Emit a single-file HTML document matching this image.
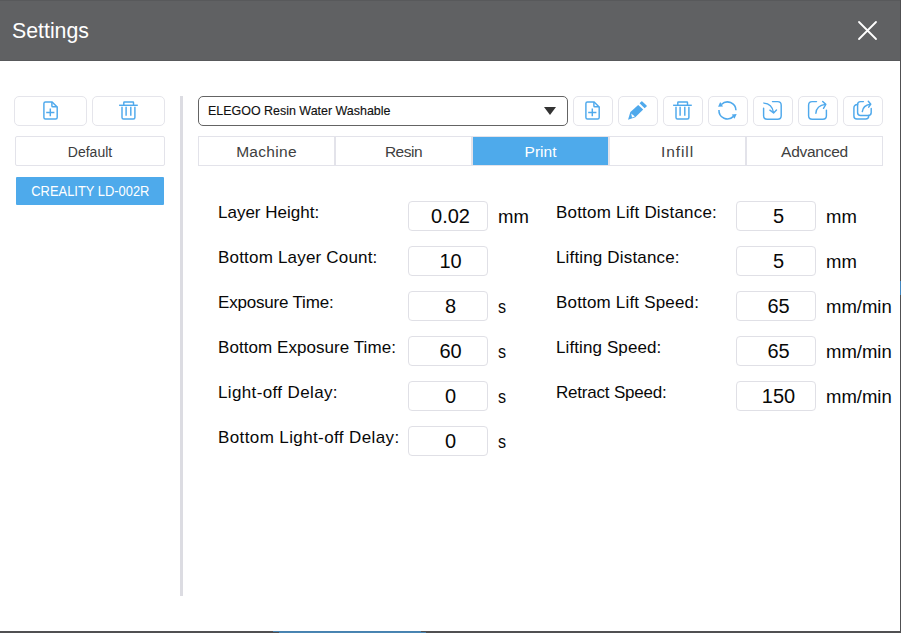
<!DOCTYPE html>
<html><head><meta charset="utf-8">
<style>
*{box-sizing:border-box;margin:0;padding:0}
html,body{width:901px;height:633px;overflow:hidden;background:#fff;font-family:"Liberation Sans",sans-serif}
.abs{position:absolute}
#hdr{left:0;top:0;width:901px;height:61px;background:#606163;border-top:1px solid #58595b;border-bottom:1px solid #58595b}
#title{left:12px;top:19px;font-size:21.3px;line-height:24px;color:#fff;white-space:nowrap}
#rb{left:900px;top:0;width:1px;height:633px;background:#505052}
#bb{left:0;top:631px;width:901px;height:2px;background:#505052}
.btn{position:absolute;height:30px;border:1px solid #e5e5eb;border-radius:5px;background:#fff}
.btn svg{position:absolute;left:0;top:0}
.lst{position:absolute;left:15px;width:150px;height:30px;font-size:14px;line-height:30px;text-align:center;white-space:nowrap}
#dv{left:180px;top:96px;width:3px;height:500px;background:#dcdce2}
#combo{left:198px;top:96px;width:370px;height:30px;border:1px solid #646464;border-radius:5px;background:#fff}
#combotxt{left:208px;top:103px;font-size:13.4px;line-height:16px;color:#111;white-space:nowrap;-webkit-text-stroke:0.15px #111;transform:scaleX(0.93);transform-origin:0 0}
#tri{left:544px;top:107px;width:0;height:0;border-left:6px solid transparent;border-right:6px solid transparent;border-top:8px solid #333}
.tab{position:absolute;top:136px;width:137px;height:30px;border:1px solid #e3e3ea;font-size:15.5px;line-height:29px;text-align:center;color:#404040;white-space:nowrap}
.tab.on{background:#4eaaeb;color:#fff}
.lbl{position:absolute;font-size:17px;line-height:20px;color:#080808;white-space:nowrap}
.inp{position:absolute;width:80px;height:30px;border:1px solid #e0e0e6;border-radius:4px;font-size:20px;line-height:28px;text-align:center;color:#080808;padding-left:5px}
.unit{position:absolute;font-size:18.5px;line-height:22px;color:#080808;white-space:nowrap}
</style></head><body>
<div id="hdr" class="abs"></div>
<div id="title" class="abs">Settings</div>
<svg class="abs" style="left:850px;top:14px" width="34" height="34" viewBox="0 0 34 34"><path d="M9,8 L26,25 M26,8 L9,25" stroke="#fff" stroke-width="1.8" stroke-linecap="round" fill="none"/></svg>

<!-- sidebar -->
<div class="btn" style="left:14px;top:96px;width:73px"></div>
<div class="btn" style="left:92px;top:96px;width:73px"></div>
<div class="lst" style="top:136px;border:1px solid #e3e3ea;border-radius:2px;color:#3c3c3c">Default</div>
<div class="lst" style="top:177px;left:16px;width:148px;height:28px;line-height:28px;background:#4eaaeb;color:#fff;border-radius:1px"><span style="display:inline-block;font-size:14.5px;transform:scaleX(0.89)">CREALITY LD-002R</span></div>
<div id="dv" class="abs"></div>

<!-- combo -->
<div id="combo" class="abs"></div>
<div id="combotxt" class="abs">ELEGOO Resin Water Washable</div>
<div id="tri" class="abs"></div>

<!-- toolbar buttons -->
<div class="btn" style="left:573px;top:96px;width:40px"></div>
<div class="btn" style="left:618px;top:96px;width:40px"></div>
<div class="btn" style="left:663px;top:96px;width:40px"></div>
<div class="btn" style="left:708px;top:96px;width:40px"></div>
<div class="btn" style="left:753px;top:96px;width:40px"></div>
<div class="btn" style="left:798px;top:96px;width:40px"></div>
<div class="btn" style="left:843px;top:96px;width:40px"></div>

<!-- tabs -->
<div class="tab" style="left:198px;letter-spacing:0.3px">Machine</div>
<div class="tab" style="left:335px;letter-spacing:-0.5px">Resin</div>
<div class="tab on" style="left:472px">Print</div>
<div class="tab" style="left:609px;letter-spacing:0.9px">Infill</div>
<div class="tab" style="left:746px;letter-spacing:-0.27px">Advanced</div>

<!-- left column -->
<div class="lbl" style="left:218px;top:203px">Layer Height:</div>
<div class="lbl" style="left:218px;top:248px;letter-spacing:0.19px">Bottom Layer Count:</div>
<div class="lbl" style="left:218px;top:293px;letter-spacing:-0.19px">Exposure Time:</div>
<div class="lbl" style="left:218px;top:338px;letter-spacing:0.06px">Bottom Exposure Time:</div>
<div class="lbl" style="left:218px;top:383px;letter-spacing:0.37px">Light-off Delay:</div>
<div class="lbl" style="left:218px;top:428px;letter-spacing:0.39px">Bottom Light-off Delay:</div>

<div class="inp" style="left:408px;top:201px">0.02</div>
<div class="inp" style="left:408px;top:246px">10</div>
<div class="inp" style="left:408px;top:291px">8</div>
<div class="inp" style="left:408px;top:336px">60</div>
<div class="inp" style="left:408px;top:381px">0</div>
<div class="inp" style="left:408px;top:426px">0</div>

<div class="unit" style="left:498px;top:206px">mm</div>
<div class="unit" style="left:498px;top:296px;transform:scaleX(0.87);transform-origin:0 0">s</div>
<div class="unit" style="left:498px;top:341px;transform:scaleX(0.87);transform-origin:0 0">s</div>
<div class="unit" style="left:498px;top:386px;transform:scaleX(0.87);transform-origin:0 0">s</div>
<div class="unit" style="left:498px;top:431px;transform:scaleX(0.87);transform-origin:0 0">s</div>

<!-- right column -->
<div class="lbl" style="left:556px;top:203px;letter-spacing:0.2px">Bottom Lift Distance:</div>
<div class="lbl" style="left:556px;top:248px;letter-spacing:0.16px">Lifting Distance:</div>
<div class="lbl" style="left:556px;top:293px;letter-spacing:0.18px">Bottom Lift Speed:</div>
<div class="lbl" style="left:556px;top:338px;letter-spacing:0.1px">Lifting Speed:</div>
<div class="lbl" style="left:556px;top:383px;letter-spacing:-0.2px">Retract Speed:</div>

<div class="inp" style="left:736px;top:201px">5</div>
<div class="inp" style="left:736px;top:246px">5</div>
<div class="inp" style="left:736px;top:291px">65</div>
<div class="inp" style="left:736px;top:336px">65</div>
<div class="inp" style="left:736px;top:381px">150</div>

<div class="unit" style="left:826px;top:206px">mm</div>
<div class="unit" style="left:826px;top:251px">mm</div>
<div class="unit" style="left:826px;top:296px">mm/min</div>
<div class="unit" style="left:826px;top:341px">mm/min</div>
<div class="unit" style="left:826px;top:386px">mm/min</div>


<!-- icons -->
<svg class="abs" style="left:38px;top:98px" width="26" height="26" viewBox="0 0 26 26" fill="none" stroke="#4fa9ec" stroke-width="1.45"><path d="M7.4,3.9 H14.1 L19.2,9 V19.5 Q19.2,21 17.7,21 H7.4 Q5.9,21 5.9,19.5 V5.4 Q5.9,3.9 7.4,3.9 Z"/><path d="M13.9,3.9 V7.9 Q13.9,8.7 14.7,8.7 H19.2"/><path d="M8.2,14.4 H16.4 M12.3,10.5 V18.3"/></svg>
<svg class="abs" style="left:115px;top:98px" width="26" height="26" viewBox="0 0 26 26" fill="none" stroke="#4fa9ec" stroke-width="1.45"><path d="M4.1,7.3 H22.8"/><path d="M8.8,7.3 V4.4 Q8.8,3.9 9.3,3.9 H18 Q18.5,3.9 18.5,4.4 V7.3"/><path d="M7,8.8 V19.5 Q7,21 8.5,21 H18.4 Q19.9,21 19.9,19.5 V8.8"/><path d="M11.1,8.8 V17.8 M15.8,8.8 V17.8"/></svg>

<svg class="abs" style="left:580px;top:98px" width="26" height="26" viewBox="0 0 26 26" fill="none" stroke="#4fa9ec" stroke-width="1.45"><path d="M7.4,3.9 H14.1 L19.2,9 V19.5 Q19.2,21 17.7,21 H7.4 Q5.9,21 5.9,19.5 V5.4 Q5.9,3.9 7.4,3.9 Z"/><path d="M13.9,3.9 V7.9 Q13.9,8.7 14.7,8.7 H19.2"/><path d="M8.2,14.4 H16.4 M12.3,10.5 V18.3"/></svg>
<svg class="abs" style="left:624px;top:98px" width="26" height="26" viewBox="0 0 26 26"><path fill="#4fa9ec" d="M4,21.8 L6.4,13.9 L14.2,6.9 L19.2,11.4 L11.3,19.3 Z"/><path fill="#fff" d="M7.2,15.4 L10.9,18.4 L8.0,19.6 Z"/><path fill="#4fa9ec" d="M15.6,5.3 L17.3,3.5 Q17.8,3 18.3,3.5 L22.6,7.5 Q23.1,8 22.6,8.5 L20.6,10.2 Z"/></svg>
<svg class="abs" style="left:669px;top:98px" width="26" height="26" viewBox="0 0 26 26" fill="none" stroke="#4fa9ec" stroke-width="1.45"><path d="M4.1,7.3 H22.8"/><path d="M8.8,7.3 V4.4 Q8.8,3.9 9.3,3.9 H18 Q18.5,3.9 18.5,4.4 V7.3"/><path d="M7,8.8 V19.5 Q7,21 8.5,21 H18.4 Q19.9,21 19.9,19.5 V8.8"/><path d="M11.1,8.8 V17.8 M15.8,8.8 V17.8"/></svg>
<svg class="abs" style="left:714px;top:98px" width="26" height="26" viewBox="0 0 26 26"><path fill="none" stroke="#4fa9ec" stroke-width="1.55" d="M21.95,12.3 A8.5,8.5 0 0 0 7.4,6.5"/><path fill="#4fa9ec" d="M4.1,8.7 L9,8.4 L6.2,4 Z"/><path fill="none" stroke="#4fa9ec" stroke-width="1.55" d="M4.95,12 A8.5,8.5 0 0 0 19.5,18.4"/><path fill="#4fa9ec" d="M17.8,16.4 L22.7,16.1 L20.5,20.7 Z"/></svg>
<svg class="abs" style="left:759px;top:98px" width="26" height="26" viewBox="0 0 26 26" fill="none" stroke="#4fa9ec" stroke-width="1.45" stroke-linecap="round" stroke-linejoin="round"><path d="M13.5,3.6 H18.6 Q22.2,3.6 22.2,7.2 V17.7 Q22.2,21.2 18.6,21.2 H8.2 Q4.6,21.2 4.6,17.7 V10.3"/><path d="M4.9,5.1 Q13,5.5 14.5,14.5"/><path d="M10.9,12.2 L14.6,14.9 L17.5,12.1"/></svg>
<svg class="abs" style="left:804px;top:98px" width="26" height="26" viewBox="0 0 26 26" fill="none" stroke="#4fa9ec" stroke-width="1.45" stroke-linecap="round" stroke-linejoin="round"><path d="M12.5,3.6 H8.2 Q4.6,3.6 4.6,7.2 V17.7 Q4.6,21.2 8.2,21.2 H18.8 Q22.4,21.2 22.4,17.7 V12.1"/><path d="M11.9,15.2 Q12.5,7.5 21.3,6.4"/><path d="M18.7,3.5 L21.8,6.4 L19.5,10.3"/></svg>
<svg class="abs" style="left:849px;top:98px" width="26" height="26" viewBox="0 0 26 26" fill="none" stroke="#4fa9ec" stroke-width="1.45" stroke-linecap="round" stroke-linejoin="round"><path d="M14.4,3.6 H11.6 Q8.6,3.6 8.6,6.6 V14.5 Q8.6,17.5 11.6,17.5 H19.2 Q22.2,17.5 22.2,14.5 V10.5"/><path d="M8.6,6.5 Q4.9,6.7 4.9,10 V17.9 Q4.9,20.9 7.9,20.9 H16.7 Q19.7,20.9 19.7,17.9 V17.5"/><path d="M13.3,13.6 Q14,7.3 21.3,6.2"/><path d="M19.3,3.3 L21.8,6.2 L19.7,9.2"/></svg>
<div id="rb" class="abs"></div>
<div id="bb" class="abs"></div>
<div class="abs" style="left:273px;top:631px;width:148px;height:1px;background:#4682b0"></div>
<div class="abs" style="left:279px;top:632px;width:147px;height:1px;background:#4a86b3"></div>
<div class="abs" style="left:900px;top:281px;width:1px;height:14px;background:#4287c0"></div>
</body></html>
